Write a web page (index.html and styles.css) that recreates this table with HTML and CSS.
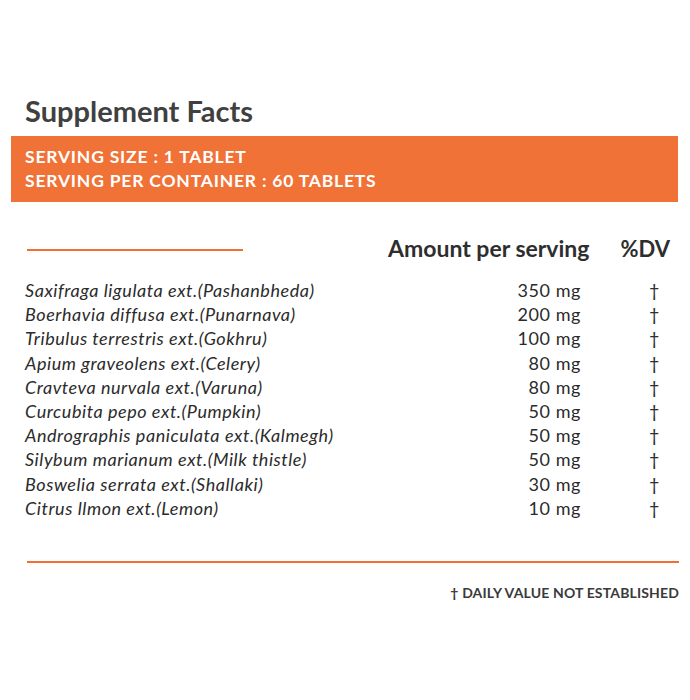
FILE: index.html
```html
<!DOCTYPE html>
<html>
<head>
<meta charset="utf-8">
<link rel="stylesheet" href="styles.css">
</head>
<body>
<div class="panel">
  <h1 class="title">Supplement Facts</h1>
  <div class="band">
    <div>SERVING SIZE : 1 TABLET</div>
    <div>SERVING PER CONTAINER : 60 TABLETS</div>
  </div>
  <div class="head">
    <div class="short-rule"></div>
    <div class="h-amt">Amount per serving</div>
    <div class="h-dv">%DV</div>
  </div>
  <div class="rows">
    <div class="row"><span class="name">Saxifraga ligulata ext.(Pashanbheda)</span><span class="amt">350 mg</span><span class="dv">†</span></div>
    <div class="row"><span class="name">Boerhavia diffusa ext.(Punarnava)</span><span class="amt">200 mg</span><span class="dv">†</span></div>
    <div class="row"><span class="name">Tribulus terrestris ext.(Gokhru)</span><span class="amt">100 mg</span><span class="dv">†</span></div>
    <div class="row"><span class="name">Apium graveolens ext.(Celery)</span><span class="amt">80 mg</span><span class="dv">†</span></div>
    <div class="row"><span class="name">Cravteva nurvala ext.(Varuna)</span><span class="amt">80 mg</span><span class="dv">†</span></div>
    <div class="row"><span class="name">Curcubita pepo ext.(Pumpkin)</span><span class="amt">50 mg</span><span class="dv">†</span></div>
    <div class="row"><span class="name">Andrographis paniculata ext.(Kalmegh)</span><span class="amt">50 mg</span><span class="dv">†</span></div>
    <div class="row"><span class="name">Silybum marianum ext.(Milk thistle)</span><span class="amt">50 mg</span><span class="dv">†</span></div>
    <div class="row"><span class="name">Boswelia serrata ext.(Shallaki)</span><span class="amt">30 mg</span><span class="dv">†</span></div>
    <div class="row"><span class="name">Citrus llmon ext.(Lemon)</span><span class="amt">10 mg</span><span class="dv">†</span></div>
  </div>
  <div class="long-rule"></div>
  <div class="foot">† DAILY VALUE NOT ESTABLISHED</div>
</div>
</body>
</html>
```

FILE: styles.css
```css
html, body {
  margin: 0;
  padding: 0;
  background: #fff;
}
body {
  font-family: Lato, "Open Sans", sans-serif;
  color: #2b2b2b;
  width: 690px;
  height: 700px;
}
.panel {
  padding-top: 93px;
}
.title {
  margin: 0 0 0 25px;
  font-size: 29px;
  font-weight: 700;
  color: #404040;
  line-height: 35px;
}
.band {
  margin: 8px 12px 0 11px;
  background: #f07236;
  color: #fff;
  font-weight: 700;
  font-size: 17.5px;
  letter-spacing: 0.8px;
  line-height: 24px;
  padding: 9px 0 9px 14px;
}
.head {
  display: flex;
  align-items: center;
  margin-top: 31px;
  height: 30px;
}
.short-rule {
  width: 216px;
  height: 2px;
  background: #ef6f34;
  margin-left: 27px;
  margin-top: 4px;
}
.h-amt {
  margin-left: 145px;
  font-size: 23px;
  font-weight: 700;
  color: #2e2e2e;
}
.h-dv {
  margin-left: 31px;
  font-size: 22px;
  font-weight: 700;
  color: #2e2e2e;
}
.rows {
  margin-top: 15px;
}
.row {
  display: flex;
  height: 24.2px;
  line-height: 24px;
  font-size: 18px;
  letter-spacing: 0.55px;
}
.name {
  font-style: italic;
  margin-left: 25px;
  width: 420px;
}
.amt {
  width: 136px;
  text-align: right;
}
.dv {
  margin-left: 68px;
}
.long-rule {
  margin: 41px 11px 0 27px;
  height: 2px;
  background: #ef6f34;
}
.foot {
  margin-top: 21px;
  text-align: right;
  padding-right: 11px;
  font-size: 14px;
  font-weight: 700;
  letter-spacing: 0.15px;
  color: #3a3a3a;
}
```
